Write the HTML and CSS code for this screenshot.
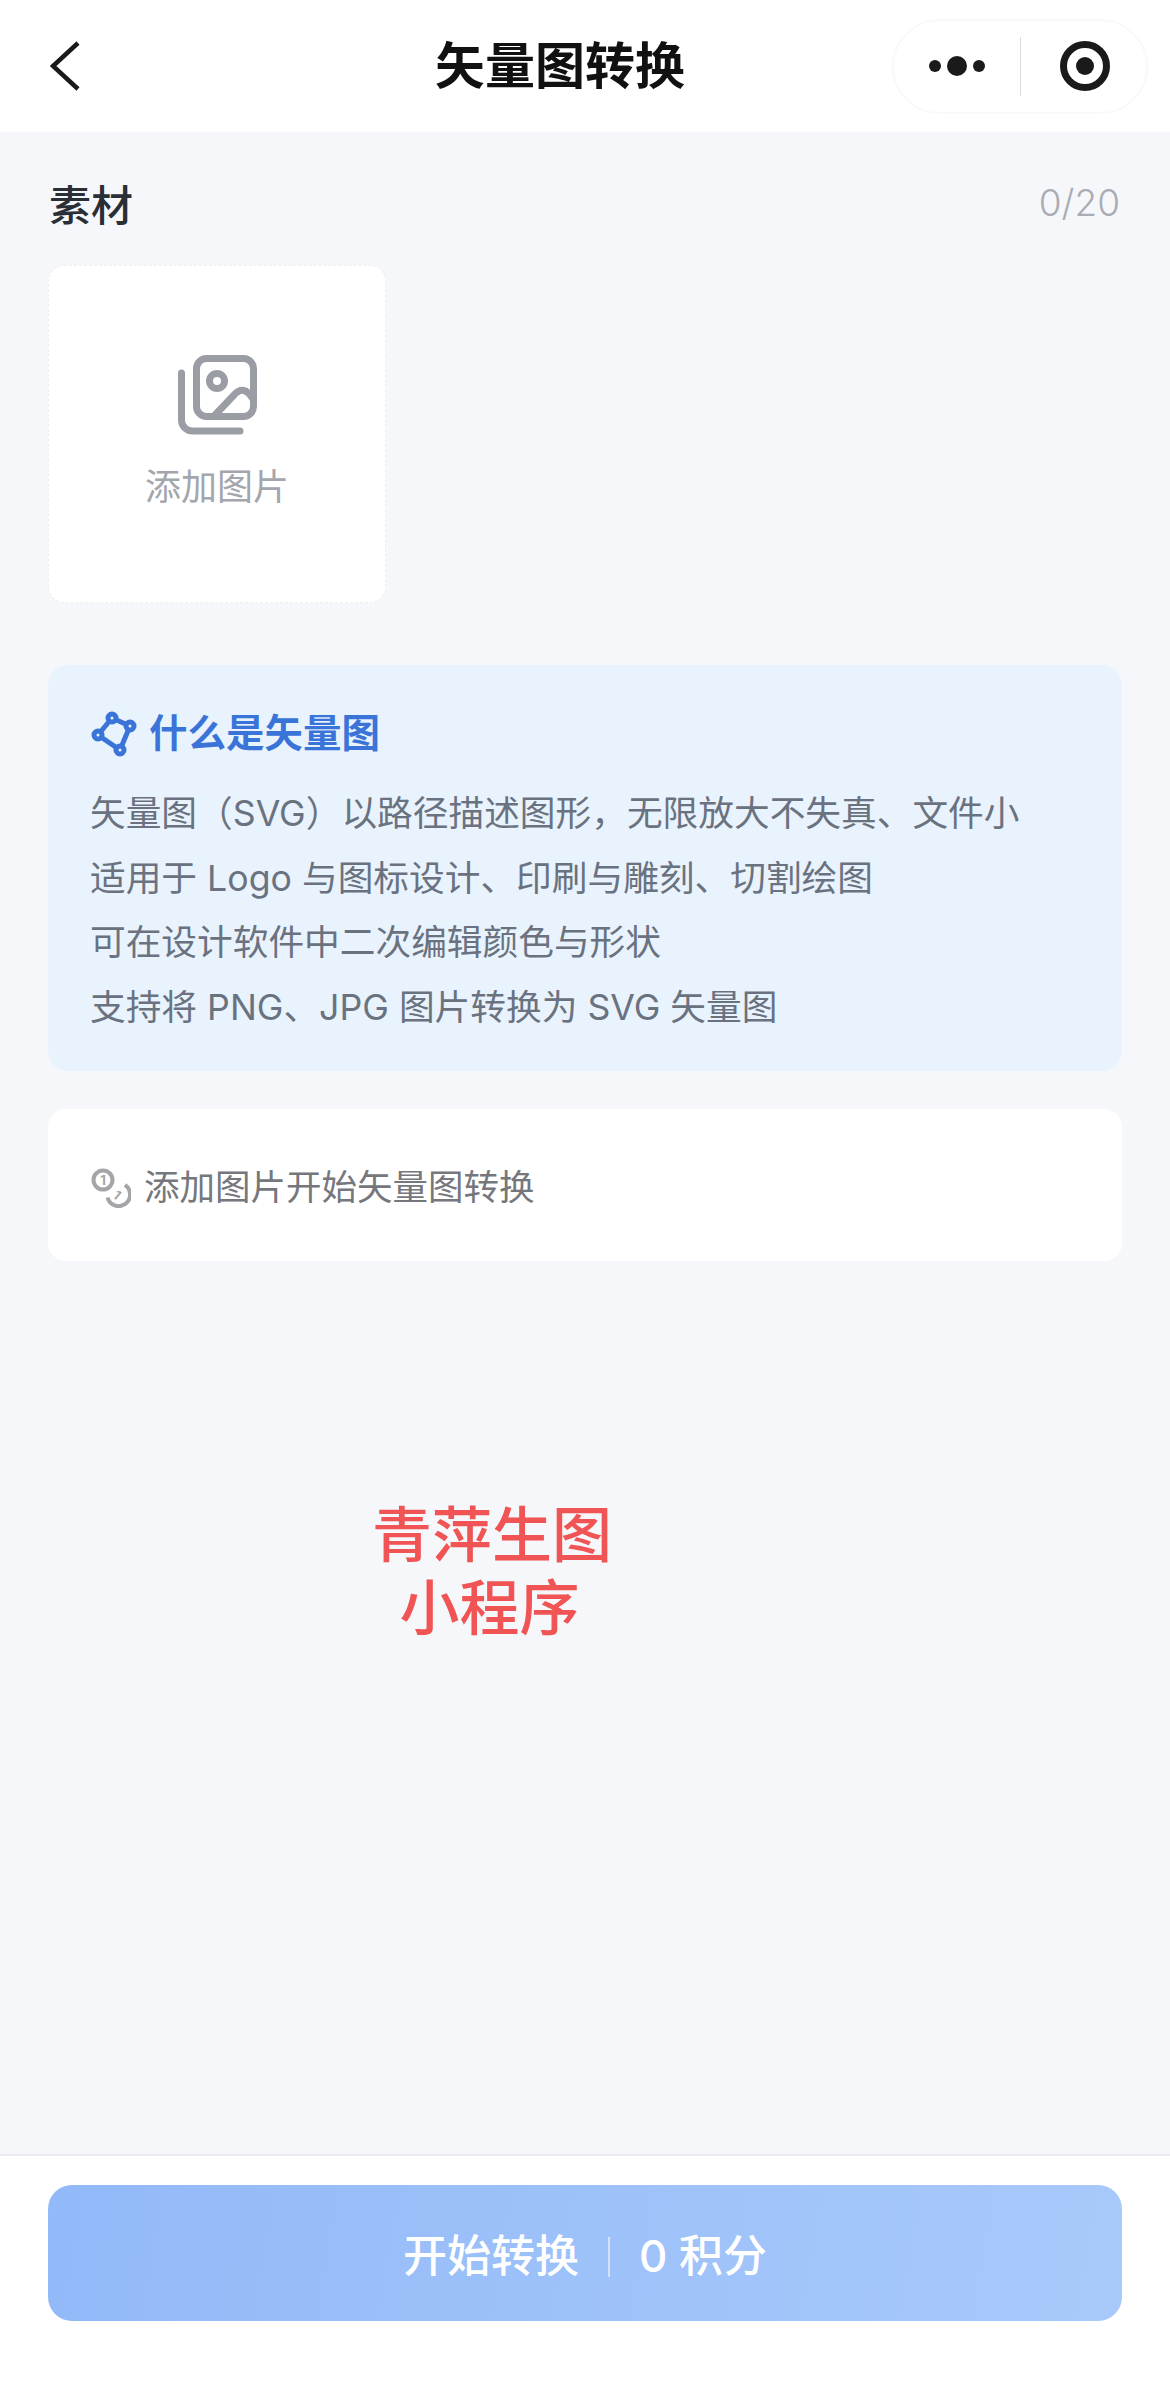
FILE: index.html
```html
<!DOCTYPE html>
<html lang="zh-CN">
<head>
    <meta charset="utf-8" />
    <title>矢量图转换</title>
    <meta name="viewport" content="width=device-width, initial-scale=1" />
    <link rel="stylesheet" href="styles.css">
</head>
<body>
<div class="page">
    <header class="nav">
        <div class="nav-left">
            <svg class="back" width="32" height="52" viewBox="0 0 32 52">
                <path d="M28 3 L3 26 L28 49" />
            </svg>
        </div>
        <h1 class="nav-title">矢量图转换</h1>
        <div class="capsule">
            <div class="capsule-part">
                <svg width="56" height="22" viewBox="0 0 56 22">
                    <circle cx="6" cy="11" r="6" />
                    <circle cx="28" cy="11" r="10" />
                    <circle cx="50" cy="11" r="6" />
                </svg>
            </div>
            <div class="capsule-line"></div>
            <div class="capsule-part capsule-target">
                <svg width="52" height="52" viewBox="0 0 52 52">
                    <circle class="ring" cx="26" cy="26" r="21.5" />
                    <circle cx="26" cy="26" r="9" />
                </svg>
            </div>
        </div>
    </header>

    <main class="content">
        <div class="section-head">
            <span class="section-title">素材</span>
            <span class="section-count">0/20</span>
        </div>

        <div class="upload">
            <svg class="upload-icon" width="79" height="80" viewBox="0 0 79 80">
                <rect x="18.5" y="3.5" width="57" height="58" rx="10" />
                <path d="M3.5 18 V65 a11 11 0 0 0 11 11 H62" />
                <circle cx="39" cy="26" r="7.5" />
                <path d="M37 60 L56 40 Q66 29 75 44" />
            </svg>
            <span class="upload-text">添加图片</span>
        </div>

        <section class="info">
            <div class="info-head">
                <svg width="44" height="44" viewBox="0 0 44 44">
                    <path class="edge" d="M20 6 L38 14 L28 38 L6 23 Z" />
                    <circle cx="20" cy="6" r="4" />
                    <circle cx="38" cy="14" r="4" />
                    <circle cx="28" cy="38" r="4" />
                    <circle cx="6" cy="23" r="4" />
                </svg>
                <span>什么是矢量图</span>
            </div>
            <p>矢量图（SVG）以路径描述图形，无限放大不失真、文件小</p>
            <p>适用于 Logo 与图标设计、印刷与雕刻、切割绘图</p>
            <p>可在设计软件中二次编辑颜色与形状</p>
            <p>支持将 PNG、JPG 图片转换为 SVG 矢量图</p>
        </section>

        <div class="hint">
            <svg width="40" height="40" viewBox="0 0 40 40">
                <circle cx="12" cy="12" r="9.5" />
                <text x="12" y="16.5" text-anchor="middle">1</text>
                <path d="M34 17 A11.5 11.5 0 1 1 16.5 29.5" />
                <text x="26" y="31.5" text-anchor="middle" transform="rotate(40 26 27)">1</text>
            </svg>
            <span>添加图片开始矢量图转换</span>
        </div>

        <div class="watermark">
            <div>青萍生图</div>
            <div class="watermark-sub">小程序</div>
        </div>
    </main>

    <footer class="bottom">
        <button class="start">
            <span>开始转换</span>
            <i class="start-line"></i>
            <span>0 积分</span>
        </button>
    </footer>
</div>
</body>
</html>
```

FILE: styles.css
```css
* { box-sizing: border-box; }
html, body { margin: 0; padding: 0; }
body {
    background-color: #f6f7fb;
    font-family: Inter, "Noto Sans CJK SC", sans-serif;
}
.page {
    width: 1170px; height: 2391px;
    display: flex; flex-direction: column;
}

.nav {
    height: 132px; background-color: #fff;
    display: flex; align-items: center;
    padding-right: 22px;
}
.nav-left {
    width: 228px; padding-left: 50px;
    display: flex; align-items: center;
}
.back { fill: none; stroke: #1a1a1a; stroke-width: 4.5; }
.nav-title {
    flex: 1; margin: 0; text-align: center;
    font-size: 50px; line-height: 60px; font-weight: 700; color: #111;
}
.capsule {
    width: 256px; height: 95px;
    border: 2px solid #f9f9fa; border-radius: 48px;
    display: flex; align-items: center;
    fill: #1a1a1a;
}
.capsule-part {
    flex: 1; display: flex; justify-content: center; align-items: center;
}
.capsule-target svg { margin-left: 4px; }
.capsule-line { width: 1px; height: 59px; background-color: #dcdcdc; }
.ring { fill: none; stroke: #1a1a1a; stroke-width: 7; }

.content {
    flex: 1; position: relative;
    padding: 41px 48px 0;
}
.section-head {
    display: flex; justify-content: space-between; align-items: center;
    height: 58px; padding: 0 2px 0 1px;
}
.section-title { font-size: 42px; font-weight: 500; color: #2a2e35; }
.section-count { font-size: 37px; color: #a9adb3; font-weight: 300; }

.upload {
    width: 338px; height: 338px; margin-top: 34px;
    background-color: #fff;
    border: 1px dashed #eceef2; border-radius: 16px;
    display: flex; flex-direction: column; align-items: center;
    padding-top: 89px;
}
.upload-icon { fill: none; stroke: #9a9da4; stroke-width: 7; stroke-linecap: round; }
.upload-text { margin-top: 30px; font-size: 36px; line-height: 44px; color: #a3a6ac; }

.info {
    margin-top: 62px; height: 406px;
    background-color: #e9f3fd; border-radius: 20px;
    padding: 41px 42px 0 44px;
}
.info-head {
    display: flex; align-items: center; gap: 13px;
    height: 48px; margin-bottom: 27px;
    font-size: 38.5px; font-weight: 600; color: #3b74d8;
}
.info-head svg {
    margin-top: 7px; overflow: visible;
    fill: #e9f3fd; stroke: #3b74d8; stroke-width: 5;
}
.edge { fill: none; }
.info p {
    margin: 0 0 0 -2px; font-size: 35.7px; line-height: 64.7px; color: #6a7280;
    white-space: nowrap;
}

.hint {
    margin-top: 38px; height: 152px;
    background-color: #fff; border-radius: 18px;
    display: flex; align-items: center; gap: 13px;
    padding-left: 43px; padding-bottom: 2px;
    font-size: 35.5px; color: #75777c;
}
.hint svg { margin-top: 8px; fill: none; stroke: #a3a5a8; stroke-width: 4; }
.hint text {
    fill: #a3a5a8; stroke: none;
    font-size: 13px; font-weight: 700;
}

.watermark {
    position: absolute; left: 320px; top: 1367px; width: 344px;
    text-align: center;
    font-size: 60px; line-height: 73px; font-weight: 500; color: #f05454;
}
.watermark-sub { padding-right: 5px; }

.bottom {
    height: 237px; background-color: #fff;
    border-top: 2px solid #e9ebef;
    padding: 29px 48px 0;
}
.start {
    width: 1074px; height: 136px; padding: 0;
    border: 0; border-radius: 24px;
    background: linear-gradient(100deg, #92b9f8, #a8c9fa);
    display: flex; align-items: center; justify-content: center; gap: 29px;
    font-family: inherit; font-size: 44px; font-weight: 500; color: #fff;
}
.start-line {
    width: 2px; height: 40px; margin-top: 8px;
    background-color: rgba(255, 255, 255, 0.55);
}
```
